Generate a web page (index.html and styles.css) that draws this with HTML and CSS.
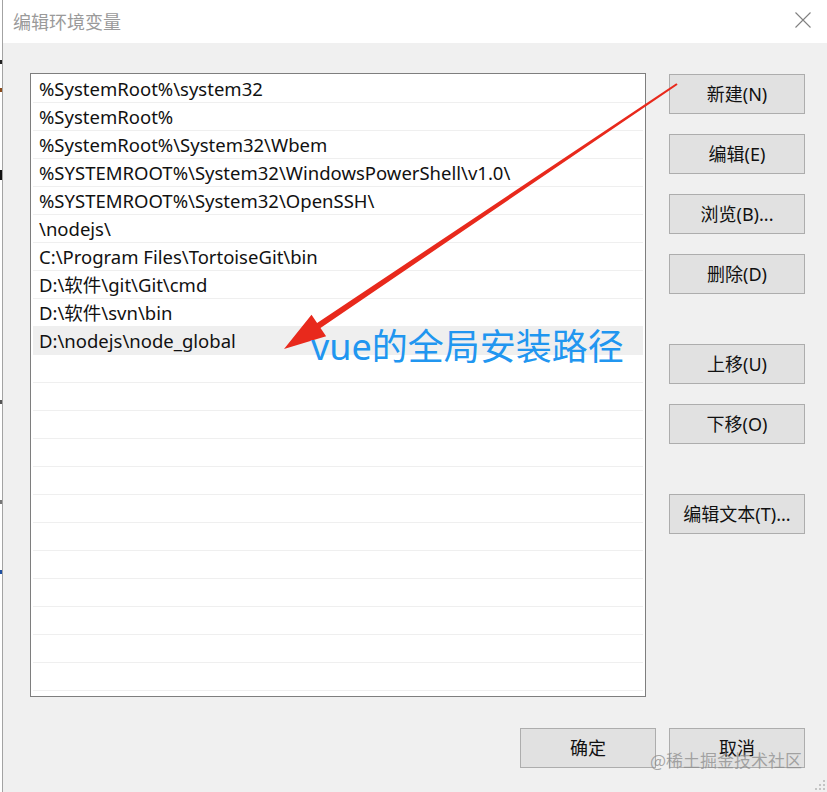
FILE: index.html
```html
<!DOCTYPE html>
<html lang="zh">
<head>
<meta charset="utf-8">
<title>编辑环境变量</title>
<link rel="stylesheet" href="styles.css">
</head>
<body>
<div class="screen">
  <div class="edge"></div>
  <div class="window">
    <div class="titlebar">
      <span class="title">编辑环境变量</span>
      <svg class="close" width="16" height="16" viewBox="0 0 16 16"><path d="M0.5 0.5 L15.5 15.5 M15.5 0.5 L0.5 15.5" stroke="#808080" stroke-width="1.1" fill="none"/></svg>
    </div>
    <div class="body">
      <div class="main">
        <div class="list">
          <div class="row">%SystemRoot%\system32</div>
          <div class="row">%SystemRoot%</div>
          <div class="row">%SystemRoot%\System32\Wbem</div>
          <div class="row">%SYSTEMROOT%\System32\WindowsPowerShell\v1.0\</div>
          <div class="row">%SYSTEMROOT%\System32\OpenSSH\</div>
          <div class="row">\nodejs\</div>
          <div class="row">C:\Program Files\TortoiseGit\bin</div>
          <div class="row">D:\软件\git\Git\cmd</div>
          <div class="row">D:\软件\svn\bin</div>
          <div class="row selected">D:\nodejs\node_global</div>
          <div class="row"></div>
          <div class="row"></div>
          <div class="row"></div>
          <div class="row"></div>
          <div class="row"></div>
          <div class="row"></div>
          <div class="row"></div>
          <div class="row"></div>
          <div class="row"></div>
          <div class="row"></div>
          <div class="row"></div>
          <div class="row"></div>
        </div>
        <div class="buttons">
          <button class="btn">新建(N)</button>
          <button class="btn">编辑(E)</button>
          <button class="btn">浏览(B)...</button>
          <button class="btn">删除(D)</button>
          <button class="btn group">上移(U)</button>
          <button class="btn">下移(O)</button>
          <button class="btn group">编辑文本(T)...</button>
        </div>
      </div>
      <div class="footer">
        <button class="btn">确定</button>
        <button class="btn">取消</button>
      </div>
    </div>
  </div>
  <svg class="arrow" width="827" height="792" viewBox="0 0 827 792">
    <polygon fill="#e8291c" points="677.6,84.8 676.4,83.2 317.1,323.0 311.5,314.7 284,349 326.1,336.3 320.5,328.0"/>
  </svg>
  <div class="note">vue的全局安装路径</div>
  <div class="watermark">@稀土掘金技术社区</div>
  <svg class="grip" width="10" height="10" viewBox="0 0 10 10">
    <g fill="#c4c4c4">
      <rect x="8" y="0" width="2" height="2"/>
      <rect x="4" y="4" width="2" height="2"/><rect x="8" y="4" width="2" height="2"/>
      <rect x="0" y="8" width="2" height="2"/><rect x="4" y="8" width="2" height="2"/><rect x="8" y="8" width="2" height="2"/>
    </g>
  </svg>
</div>
</body>
</html>
```

FILE: styles.css
```css
html, body {
  margin: 0;
  padding: 0;
  background: #ffffff;
}

.screen {
  position: relative;
  width: 827px;
  height: 792px;
  display: flex;
  overflow: hidden;
  font-family: "Noto Sans", "Noto Sans CJK SC", sans-serif;
}

.edge {
  width: 2px;
  flex: none;
  background: linear-gradient(#fff 0 60px, #222 60px 64px, #fff 64px 88px, #8a4a1a 88px 92px, #fff 92px 170px, #111 170px 180px, #fff 180px 400px, #555 400px 404px, #fff 404px 500px, #777 500px 504px, #fff 504px 570px, #2050a0 570px 574px, #fff 574px);
  border-right: 1px solid #a3a3a3;
}

.window {
  flex: 1;
  display: flex;
  flex-direction: column;
  background: #f0f0f0;
}

.titlebar {
  height: 43px;
  flex: none;
  background: #ffffff;
  display: flex;
  align-items: center;
  justify-content: space-between;
  padding: 0 16px 0 10px;
}

.title {
  font-family: "Noto Sans CJK SC", sans-serif;
  font-size: 18px;
  color: #9a9a9a;
  line-height: 20px;
  margin-top: -1px;
}

.close {
  display: block;
  margin-top: -3px;
}

.body {
  flex: 1;
  display: flex;
  flex-direction: column;
  padding: 30px 22px 0 27px;
}

.main {
  display: flex;
  gap: 23px;
}

.list {
  width: 616px;
  height: 624px;
  box-sizing: border-box;
  border: 1px solid #7e7e7e;
  background: #ffffff;
  padding: 1px 2px 0 2px;
  overflow: hidden;
}

.row {
  height: 28px;
  box-sizing: border-box;
  border-bottom: 1px solid #efefef;
  padding-left: 6px;
  font-size: 18.5px;
  line-height: 27px;
  color: #111;
  white-space: nowrap;
}

.row.selected {
  background: #efefef;
}

.buttons {
  display: flex;
  flex-direction: column;
  padding-top: 1px;
  gap: 20px;
}

.btn {
  width: 136px;
  height: 40px;
  box-sizing: border-box;
  border: 1px solid #adadad;
  background: #e1e1e1;
  font-family: "Noto Sans", "Noto Sans CJK SC", sans-serif;
  font-size: 18px;
  color: #111;
  padding: 0;
  margin: 0;
  line-height: 38px;
}

.btn.group {
  margin-top: 30px;
}

.footer {
  display: flex;
  justify-content: flex-end;
  gap: 13px;
  margin-top: 31px;
}

.arrow {
  position: absolute;
  left: 0;
  top: 0;
  pointer-events: none;
}

.note {
  position: absolute;
  left: 311px;
  top: 329px;
  font-size: 36px;
  line-height: 36px;
  color: #2196f0;
  white-space: nowrap;
}

.watermark {
  position: absolute;
  left: 650px;
  top: 749px;
  font-family: "Noto Sans CJK SC", sans-serif;
  font-size: 17px;
  line-height: 22px;
  color: rgba(140, 140, 140, 0.75);
  white-space: nowrap;
}

.grip {
  position: absolute;
  right: 2px;
  bottom: 2px;
}
```
